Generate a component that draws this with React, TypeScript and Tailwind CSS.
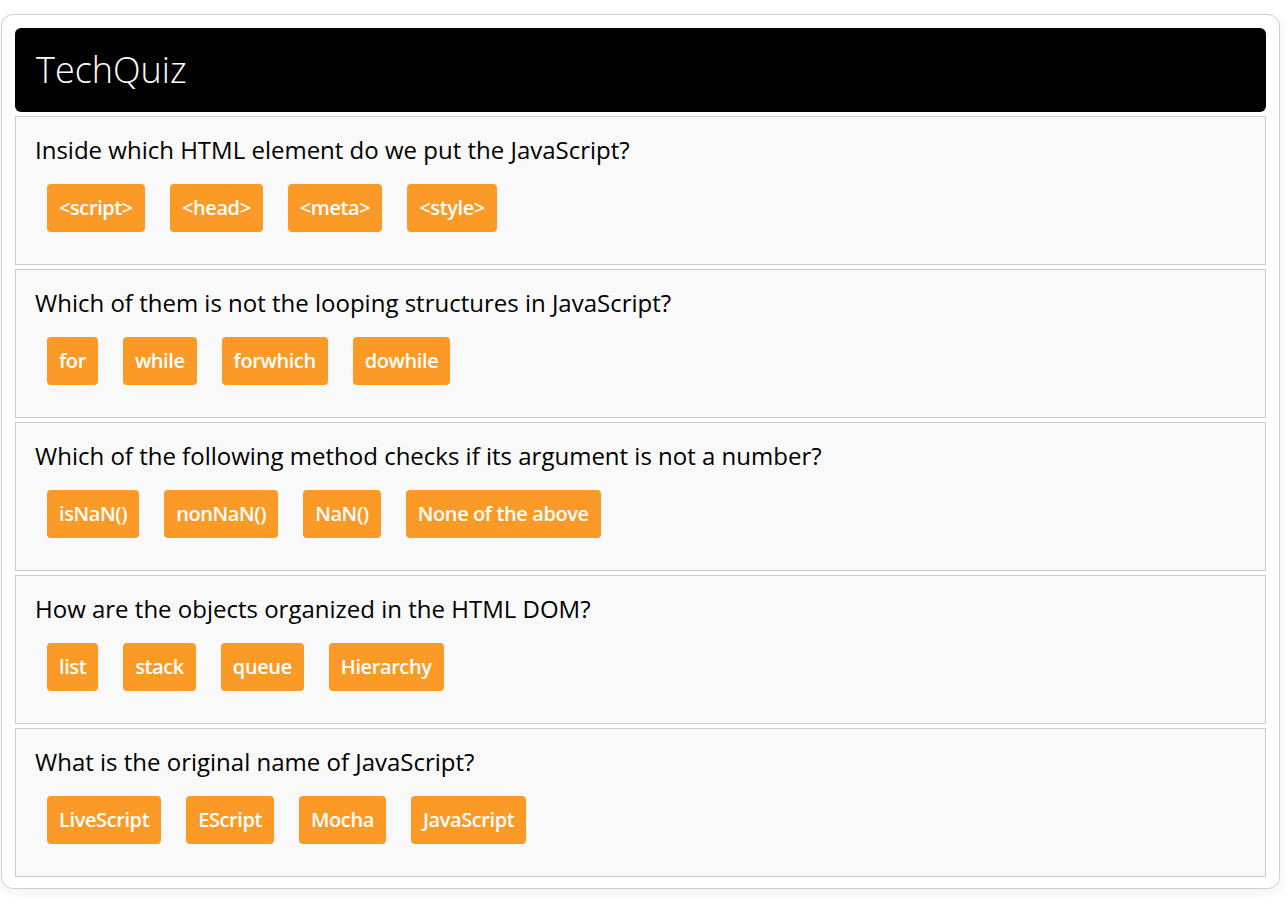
import React from 'react';

const questions = [
  {
    q: 'Inside which HTML element do we put the JavaScript?',
    options: ['<script>', '<head>', '<meta>', '<style>'],
  },
  {
    q: 'Which of them is not the looping structures in JavaScript?',
    options: ['for', 'while', 'forwhich', 'dowhile'],
  },
  {
    q: 'Which of the following method checks if its argument is not a number?',
    options: ['isNaN()', 'nonNaN()', 'NaN()', 'None of the above'],
  },
  {
    q: 'How are the objects organized in the HTML DOM?',
    options: ['list', 'stack', 'queue', 'Hierarchy'],
  },
  {
    q: 'What is the original name of JavaScript?',
    options: ['LiveScript', 'EScript', 'Mocha', 'JavaScript'],
  },
];

const App = () => {
  return (
    <div className="min-h-screen bg-white pt-[14px] pl-px pr-[7px] font-['Open_Sans','Lato',sans-serif]">
      <div className="rounded-xl border border-[#cfcfcf] bg-white p-[13px] pb-[11px] shadow-[0_4px_12px_rgba(0,0,0,0.06)]">
        <header className="flex h-[84px] items-center rounded-md bg-black px-[21px]">
          <h1 className="text-[36px] font-light text-white">TechQuiz</h1>
        </header>
        <div className="mt-[4px] flex flex-col gap-[4px]">
          {questions.map((item) => (
            <section
              key={item.q}
              className="h-[149px] border border-[#cccccc] bg-[#f9f9f9] px-[19px] pt-[17px]"
            >
              <p className="text-[24px] leading-[32px] text-black">{item.q}</p>
              <div className="mt-[18px] ml-3 flex gap-[25px]">
                {item.options.map((opt) => (
                  <button
                    key={opt}
                    className="h-[48px] rounded-[4px] bg-[#fc9a28] px-3 text-[20px] font-semibold tracking-[-0.4px] text-white"
                  >
                    {opt}
                  </button>
                ))}
              </div>
            </section>
          ))}
        </div>
      </div>
    </div>
  );
};

export default App;
